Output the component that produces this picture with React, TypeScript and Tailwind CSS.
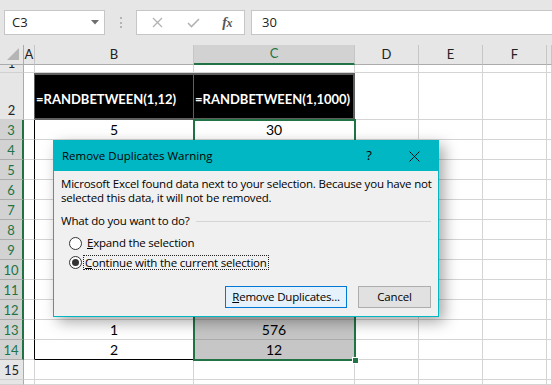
import React from 'react';

const COLS = ['', 'A', 'B', 'C', 'D', 'E', 'F', 'G'];
const ROWS = Array.from({ length: 16 }, (_, i) => i + 1);

const values: Record<string, string> = {
  B2: '=RANDBETWEEN(1,12)',
  C2: '=RANDBETWEEN(1,1000)',
  B3: '5',
  C3: '30',
  B13: '1',
  C13: '576',
  B14: '2',
  C14: '12',
};

const cellFont = "font-['Lato','Liberation_Sans',sans-serif]";
const uiFont = "font-['Open_Sans','Noto_Sans',sans-serif]";

function SelectAll() {
  return (
    <div className="relative bg-[#e6e6e6] border-r border-b border-[#ababab]">
      <svg width="14" height="14" viewBox="0 0 14 14" className="absolute right-[3px] bottom-[3px]">
        <path d="M13 1 L13 13 L1 13 Z" fill="#b5b5b5" />
      </svg>
    </div>
  );
}

function ColHeader({ name }: { name: string }) {
  const selected = name === 'C';
  return (
    <div
      className={
        selected
          ? `flex items-center justify-center overflow-hidden bg-[#d2d2d2] border-r border-r-[#c6c6c6] border-b-2 border-b-[#217346] text-[#217346] text-[13px] ${cellFont}`
          : `flex items-center justify-center overflow-hidden bg-[#e6e6e6] border-r border-r-[#c6c6c6] border-b border-b-[#ababab] text-[#222] text-[13px] ${cellFont}`
      }
    >
      {name === 'G' ? '' : name}
    </div>
  );
}

function RowHeader({ r }: { r: number }) {
  const selected = r >= 3 && r <= 14;
  return (
    <div
      className={
        selected
          ? `flex items-end justify-center overflow-hidden leading-[18px] bg-[#d2d2d2] border-r-2 border-r-[#217346] border-b border-b-[#ababab] text-[#217346] text-[13px] ${cellFont}`
          : `flex items-end justify-center overflow-hidden leading-[18px] bg-[#e6e6e6] border-r border-r-[#ababab] border-b border-b-[#d0d0d0] text-[#222] text-[13px] ${cellFont}`
      }
    >
      {r === 16 ? '' : r}
    </div>
  );
}

function Cell({ r, c }: { r: number; c: string }) {
  const key = `${c}${r}`;
  const v = values[key];

  if (r === 2 && c === 'B') {
    return (
      <div className={`flex items-center pt-[7px] pl-[1px] overflow-hidden whitespace-nowrap bg-black border-t-2 border-b-2 border-r border-[#5f5f5f] text-white font-bold text-[13px] ${cellFont}`}>
        {v}
      </div>
    );
  }
  if (r === 2 && c === 'C') {
    return (
      <div className={`flex items-center pt-[7px] pl-[1px] overflow-hidden whitespace-nowrap bg-black border-t-2 border-b-2 border-r-2 border-[#5f5f5f] text-white font-bold text-[13px] ${cellFont}`}>
        {v}
      </div>
    );
  }

  let cls = 'border-r border-b border-[#d4d4d4] bg-white';
  if (c === 'A' && r === 2) cls = 'border-r border-b border-[#d4d4d4] border-r-[#5f5f5f] bg-white';
  if (c === 'A' && r >= 3 && r <= 14) cls = 'border-r border-b border-[#d4d4d4] border-r-black bg-white';
  if (c === 'B' && r === 14) cls = 'border-r border-b border-[#d4d4d4] border-b-black bg-white';
  if (c === 'C' && r >= 4 && r <= 14) cls = 'border-r border-b border-[#ababab] bg-[#c6c6c6]';

  return (
    <div className={`${cls} flex items-end justify-center leading-[18px] overflow-hidden whitespace-nowrap text-black text-[14px] ${cellFont}`}>
      {v}
    </div>
  );
}

function FormulaBar() {
  return (
    <div className="h-[45px] bg-[#e6e6e6] flex items-center pl-[4px] gap-0">
      <div className={`w-[101px] h-[25px] bg-white border border-[#c6c6c6] flex items-center justify-between pl-[7px] pr-[5px] text-[13px] text-[#222] ${uiFont}`}>
        <span>C3</span>
        <svg width="8" height="5" viewBox="0 0 8 5">
          <path d="M0 0 L8 0 L4 4.5 Z" fill="#6e6e6e" />
        </svg>
      </div>
      <div className="w-[31px] flex flex-col items-center gap-[2.5px]">
        <span className="w-[2px] h-[2px] bg-[#b4b4b4]" />
        <span className="w-[2px] h-[2px] bg-[#b4b4b4]" />
        <span className="w-[2px] h-[2px] bg-[#b4b4b4]" />
      </div>
      <div className="w-[109px] h-[25px] bg-white border border-[#c6c6c6] flex items-center">
        <div className="w-[40px] flex justify-center pl-[1px]">
          <svg width="11" height="11" viewBox="0 0 11 11">
            <path d="M1 1 L10 10 M10 1 L1 10" stroke="#b3b3b3" strokeWidth="1.3" />
          </svg>
        </div>
        <div className="w-[34px] flex justify-center">
          <svg width="13" height="10" viewBox="0 0 13 10">
            <path d="M1 5 L4.5 8.5 L12 1" stroke="#b3b3b3" strokeWidth="1.6" fill="none" />
          </svg>
        </div>
        <div className="w-[34px] flex justify-center">
          <span className="font-['Liberation_Serif',serif] italic font-bold text-[14px] text-[#555] tracking-[-0.5px]">
            f<span className="text-[12px]">x</span>
          </span>
        </div>
      </div>
      <div className={`ml-[6px] flex-1 h-[25px] bg-white border border-r-0 border-[#c6c6c6] flex items-center pl-[10px] text-[13px] text-[#222] ${uiFont}`}>
        30
      </div>
    </div>
  );
}

function Radio({ checked }: { checked: boolean }) {
  return (
    <span className="w-[13px] h-[13px] rounded-full border border-[#333] bg-white flex items-center justify-center shrink-0">
      {checked && <span className="w-[7px] h-[7px] rounded-full bg-[#333]" />}
    </span>
  );
}

function Dialog() {
  return (
    <div className={`absolute left-[53px] top-[140px] w-[386px] h-[177px] bg-[#f0f0f0] border border-[#00b7c3] shadow-[5px_5px_14px_rgba(0,0,0,0.35)] flex flex-col text-[11.5px] text-black ${uiFont}`}>
      <div className="h-[30px] bg-[#00b7c3] flex items-center pl-[8px] shrink-0">
        <span className="flex-1">Remove Duplicates Warning</span>
        <span className="w-[10px] text-center mr-[35px] text-[13px]">?</span>
        <svg width="11" height="11" viewBox="0 0 11 11" className="mr-[18px]">
          <path d="M0.5 0.5 L10.5 10.5 M10.5 0.5 L0.5 10.5" stroke="#111" strokeWidth="1" />
        </svg>
      </div>
      <div className="flex flex-col px-[7px] pt-[6px] leading-[14px] tracking-[-0.2px]">
        <p className="whitespace-nowrap">Microsoft Excel found data next to your selection. Because you have not</p>
        <p className="whitespace-nowrap">selected this data, it will not be removed.</p>
        <div className="flex items-center mt-[9px]">
          <span>What do you want to do?</span>
          <span className="flex-1 ml-[6px] h-px bg-[#d5d5d5]" />
        </div>
        <div className="flex items-center mt-[7px] pl-[8px] h-[16px]">
          <Radio checked={false} />
          <span className="ml-[4px] px-[1px]">
            <span className="underline">E</span>xpand the selection
          </span>
        </div>
        <div className="flex items-center mt-[3px] pl-[8px] h-[16px]">
          <Radio checked={true} />
          <span className="ml-[2px] px-[1px] outline outline-1 outline-dotted outline-[#222] leading-[13px]">
            <span className="underline">C</span>ontinue with the current selection
          </span>
        </div>
        <div className="flex justify-end gap-[11px] mt-[16px]">
          <button className="w-[122px] h-[22px] border border-[#0078d7] bg-[#e5f1fb] flex items-center justify-center">
            <span>
              <span className="underline">R</span>emove Duplicates...
            </span>
          </button>
          <button className="w-[73px] h-[22px] border border-[#adadad] bg-[#e1e1e1] flex items-center justify-center">
            Cancel
          </button>
        </div>
      </div>
    </div>
  );
}

export default function App() {
  return (
    <div className="relative w-[552px] h-[385px] overflow-hidden bg-white">
      <FormulaBar />
      <div className="grid grid-cols-[24px_11px_159px_161px_64px_64px_64px_5px] grid-rows-[20px_8px_47px_repeat(13,20px)_5px]">
        <SelectAll />
        {COLS.slice(1).map((c) => (
          <ColHeader key={c} name={c} />
        ))}
        {ROWS.map((r) => (
          <React.Fragment key={r}>
            <RowHeader r={r} />
            {COLS.slice(1).map((c) => (
              <Cell key={c} r={r} c={c} />
            ))}
          </React.Fragment>
        ))}
      </div>
      {/* selection outline + fill handle */}
      <div className="absolute left-[193px] top-[119px] w-[163px] h-[242px] border-2 border-[#217346] pointer-events-none" />
      <div className="absolute left-[352px] top-[357px] w-[7px] h-[7px] bg-[#217346] border border-white pointer-events-none" />
      <Dialog />
    </div>
  );
}
